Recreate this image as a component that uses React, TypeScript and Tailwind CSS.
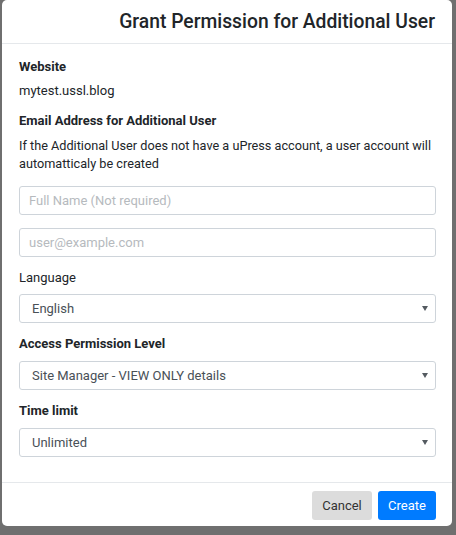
import React from 'react';

const font = { fontFamily: 'Roboto, "Liberation Sans", sans-serif' };

function Caret() {
  return (
    <svg width="6" height="5" viewBox="0 0 6 5" className="shrink-0">
      <path d="M0 0 H6 L3 5 Z" fill="#555b61" />
    </svg>
  );
}

function SelectBox({ value }: { value: string }) {
  return (
    <div className="flex h-[29px] items-center justify-between rounded-[3px] border border-[#ced4da] bg-white pl-[12px] pr-[7px] text-[13px] text-[#495057]">
      <span>{value}</span>
      <Caret />
    </div>
  );
}

function TextInput({ placeholder }: { placeholder: string }) {
  return (
    <div className="flex h-[29px] items-center rounded-[3px] border border-[#ced4da] bg-white px-[9px] text-[13px] text-[#b6babe]">
      {placeholder}
    </div>
  );
}

export default function App() {
  return (
    <div className="h-[535px] w-[456px] overflow-hidden bg-[#6f6f6f]" style={font}>
      <div className="ml-[2px] w-[450px] rounded-[5px] bg-white text-[#212529]">
        {/* header */}
        <div className="flex h-[44px] items-center justify-end border-b border-[#e5e8eb] pr-[17px]">
          <h2 className="text-[19.3px] font-medium leading-none">Grant Permission for Additional User</h2>
        </div>

        {/* body */}
        <div className="pb-[25px] pl-[17px] pr-[16px] pt-[14px] text-[13px] leading-[18px]">
          <p className="font-bold">Website</p>
          <p className="mt-[6px]">mytest.ussl.blog</p>
          <p className="mt-[12px] font-bold">Email Address for Additional User</p>
          <p className="mt-[7px] text-[12.7px]">
            If the Additional User does not have a uPress account, a user account will automatticaly be created
          </p>
          <div className="mt-[13px]">
            <TextInput placeholder="Full Name (Not required)" />
          </div>
          <div className="mt-[13px]">
            <TextInput placeholder="user@example.com" />
          </div>
          <p className="mt-[12px]">Language</p>
          <div className="mt-[7px]">
            <SelectBox value="English" />
          </div>
          <p className="mt-[12px] font-bold">Access Permission Level</p>
          <div className="mt-[8px]">
            <SelectBox value="Site Manager - VIEW ONLY details" />
          </div>
          <p className="mt-[12px] font-bold">Time limit</p>
          <div className="mt-[8px]">
            <SelectBox value="Unlimited" />
          </div>
        </div>

        {/* footer */}
        <div className="flex justify-end gap-[6px] border-t border-[#e5e8eb] pb-[6px] pr-[16px] pt-[8px]">
          <button className="h-[29px] w-[60px] rounded-[3px] bg-[#dcdcdc] text-[13px] text-[#333]">Cancel</button>
          <button className="h-[29px] w-[58px] rounded-[3px] bg-[#007bff] text-[13px] text-white">Create</button>
        </div>
      </div>
    </div>
  );
}
